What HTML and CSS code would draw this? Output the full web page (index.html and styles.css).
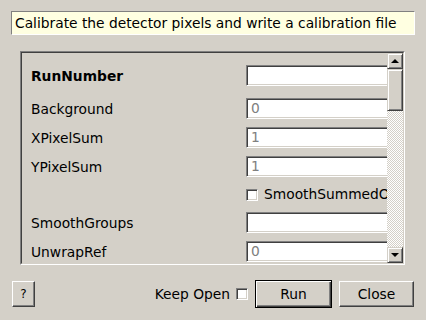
FILE: index.html
```html
<!DOCTYPE html>
<html>
<head>
<meta charset="utf-8">
<link rel="stylesheet" href="styles.css">
</head>
<body>
<div class="dialog">
  <div class="desc">Calibrate the detector pixels and write a calibration file</div>
  <div class="frame">
    <div class="frame-inner">
      <div class="viewport">
        <div class="form">
          <div class="label bold first">RunNumber</div>
          <div class="field first"></div>
          <div class="label">Background</div>
          <div class="field"><span class="ph">0</span></div>
          <div class="label">XPixelSum</div>
          <div class="field"><span class="ph">1</span></div>
          <div class="label">YPixelSum</div>
          <div class="field"><span class="ph">1</span></div>
          <div class="blank"></div>
          <div class="check-row"><span class="checkbox"></span><span class="check-text">SmoothSummedOffsets</span></div>
          <div class="label">SmoothGroups</div>
          <div class="field"></div>
          <div class="label">UnwrapRef</div>
          <div class="field"><span class="ph">0</span></div>
        </div>
      </div>
      <div class="scrollbar">
        <div class="sb-btn"><span class="arrow-up"></span></div>
        <div class="sb-track">
          <div class="sb-thumb"></div>
        </div>
        <div class="sb-btn"><span class="arrow-down"></span></div>
      </div>
    </div>
  </div>
  <div class="buttons">
    <div class="btn help">?</div>
    <div class="spacer"></div>
    <span class="keep">Keep Open</span>
    <span class="checkbox keep-box"></span>
    <div class="btn run">Run</div>
    <div class="btn close">Close</div>
  </div>
</div>
</body>
</html>
```

FILE: styles.css
```css
html, body {
  margin: 0;
  padding: 0;
  background: #d4d0c8;
}
body {
  width: 426px;
  height: 320px;
  overflow: hidden;
  font-family: "DejaVu Sans", sans-serif;
  font-size: 13.8px;
  color: #000;
}
.dialog {
  padding: 11px 11px 0 11px;
}
.desc {
  height: 22px;
  line-height: 22px;
  background: #ffffe1;
  border: 1px solid;
  border-color: #808080 #ffffff #ffffff #808080;
  padding-left: 3px;
  white-space: nowrap;
  overflow: hidden;
}
.frame {
  margin: 16px 10px 0 9px;
  height: 212px;
  border: 1px solid;
  border-color: #808080 #ffffff #ffffff #808080;
}
.frame-inner {
  height: 210px;
  border: 1px solid;
  border-color: #404040 #d4d0c8 #d4d0c8 #404040;
  display: flex;
}
.viewport {
  flex: 1;
  overflow: hidden;
}
.form {
  padding: 12px 0 0 9px;
  display: grid;
  grid-template-columns: 215px 200px;
  row-gap: 8px;
  align-items: center;
}
.label {
  white-space: nowrap;
  height: 21px;
  line-height: 23px;
  overflow: visible;
}
.blank {
  height: 0;
}
.label.first, .field.first {
  margin-bottom: 4px;
}
.bold {
  font-weight: bold;
}
.field {
  height: 17px;
  line-height: 17px;
  background: #fff;
  border: 1px solid;
  border-color: #808080 #fff #fff #808080;
  box-shadow: inset 1px 1px 0 #404040, inset -1px -1px 0 #d4d0c8;
  padding: 1px 1px 1px 4px;
}
.ph {
  color: #808080;
}
.check-row {
  height: 19px;
  display: flex;
  align-items: center;
  white-space: nowrap;
}
.checkbox {
  display: inline-block;
  box-sizing: border-box;
  width: 12px;
  height: 12px;
  background: #fff;
  border: 1px solid;
  border-color: #808080 #fff #fff #808080;
  box-shadow: inset 1px 1px 0 #404040, inset -1px -1px 0 #d4d0c8;
  flex: none;
}
.check-text {
  margin-left: 6px;
  line-height: 19px;
}
.scrollbar {
  width: 16px;
  display: flex;
  flex-direction: column;
}
.sb-btn, .sb-thumb {
  box-sizing: border-box;
  background: #d4d0c8;
  border: 1px solid;
  border-color: #d4d0c8 #404040 #404040 #d4d0c8;
  box-shadow: inset 1px 1px 0 #fff, inset -1px -1px 0 #808080;
}
.sb-btn {
  height: 16px;
  display: flex;
  align-items: center;
  justify-content: center;
}
.arrow-up {
  width: 0;
  height: 0;
  border-left: 4px solid transparent;
  border-right: 4px solid transparent;
  border-bottom: 4px solid #000;
}
.arrow-down {
  width: 0;
  height: 0;
  border-left: 4px solid transparent;
  border-right: 4px solid transparent;
  border-top: 4px solid #000;
}
.sb-track {
  flex: 1;
  background: repeating-conic-gradient(#ffffff 0 25%, #d4d0c8 0 50%) 0 0 / 2px 2px;
}
.sb-thumb {
  height: 42px;
}
.buttons {
  display: flex;
  align-items: center;
  margin-top: 15px;
  padding: 0 1px 0 1px;
  height: 28px;
}
.btn {
  box-sizing: border-box;
  height: 26px;
  display: flex;
  align-items: center;
  justify-content: center;
  background: #d4d0c8;
  border: 1px solid;
  border-color: #fff #404040 #404040 #fff;
  box-shadow: inset -1px -1px 0 #808080;
}
.help {
  width: 23px;
  font-size: 12px;
}
.spacer {
  flex: 1;
}
.keep {
  white-space: nowrap;
}
.keep-box {
  margin-left: 6px;
}
.run {
  width: 77px;
  height: 28px;
  margin-left: 7px;
  border: 1px solid #000;
  box-shadow: inset 1px 1px 0 #fff, inset -1px -1px 0 #404040, inset -2px -2px 0 #808080;
}
.close {
  width: 75px;
  margin-left: 7px;
}
```
